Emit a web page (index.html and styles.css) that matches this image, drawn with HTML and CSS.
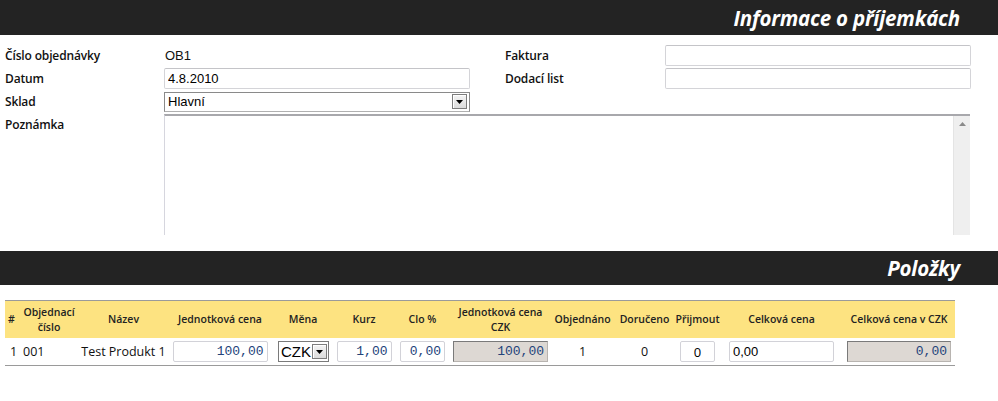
FILE: index.html
```html
<!DOCTYPE html>
<html lang="cs">
<head>
<meta charset="utf-8">
<title>Příjemka</title>
<link rel="stylesheet" href="styles.css">
</head>
<body>
<div class="bar"><h1>Informace o příjemkách</h1></div>

<div class="form">
  <div class="label r1 c1">Číslo objednávky</div>
  <div class="value r1 c2">OB1</div>
  <div class="label r1 c4">Faktura</div>
  <input class="field r1 c5" type="text" value="">

  <div class="label r2 c1">Datum</div>
  <input class="field r2 c2" type="text" value="4.8.2010">
  <div class="label r2 c4">Dodací list</div>
  <input class="field r2 c5" type="text" value="">

  <div class="label r3 c1">Sklad</div>
  <div class="select r3 c2"><span class="sel-text">Hlavní</span><span class="sel-btn"><svg width="7" height="4" viewBox="0 0 7 4"><path d="M0 0H7L3.5 4Z" fill="#000"/></svg></span></div>

  <div class="label note-label r4 c1">Poznámka</div>
  <div class="note r4">
    <textarea class="note-area"></textarea>
    <div class="scroll"><svg width="7" height="4" viewBox="0 0 7 4"><path d="M0 4H7L3.5 0Z" fill="#8a8a8a"/></svg></div>
  </div>
</div>

<div class="bar bar2"><h1>Položky</h1></div>

<table class="items">
  <colgroup>
    <col style="width:13px"><col style="width:62px"><col style="width:87px"><col style="width:106px">
    <col style="width:60px"><col style="width:62px"><col style="width:55px"><col style="width:101px">
    <col style="width:63px"><col style="width:61px"><col style="width:45px"><col style="width:123px">
    <col style="width:112px">
  </colgroup>
  <thead>
    <tr>
      <th>#</th>
      <th>Objednací<br>číslo</th>
      <th>Název</th>
      <th>Jednotková cena</th>
      <th>Měna</th>
      <th>Kurz</th>
      <th>Clo %</th>
      <th>Jednotková cena<br>CZK</th>
      <th>Objednáno</th>
      <th>Doručeno</th>
      <th>Přijmout</th>
      <th>Celková cena</th>
      <th>Celková cena v CZK</th>
    </tr>
  </thead>
  <tbody>
    <tr>
      <td class="left">1</td>
      <td class="left">001</td>
      <td>Test Produkt 1</td>
      <td><input class="cell num w95" type="text" value="100,00"></td>
      <td><div class="select small"><span class="sel-text">CZK</span><span class="sel-btn"><svg width="7" height="4" viewBox="0 0 7 4"><path d="M0 0H7L3.5 4Z" fill="#000"/></svg></span></div></td>
      <td><input class="cell num w55" type="text" value="1,00"></td>
      <td><input class="cell num w45" type="text" value="0,00"></td>
      <td><input class="cell num ro w95" type="text" value="100,00" readonly></td>
      <td>1</td>
      <td>0</td>
      <td><input class="cell ctr w35" type="text" value="0"></td>
      <td><input class="cell plain w105" type="text" value="0,00"></td>
      <td><input class="cell num ro w104" type="text" value="0,00" readonly></td>
    </tr>
  </tbody>
</table>
</body>
</html>
```

FILE: styles.css
```css
body {
  margin: 0;
  font-family: "Open Sans", "DejaVu Sans", sans-serif;
  font-size: 12px;
  color: #111;
  background: #fff;
}

.bar {
  background: #232323;
  height: 35px;
  display: flex;
  justify-content: flex-end;
  align-items: center;
  padding-right: 38px;
}
.bar h1 {
  margin: 0;
  color: #fff;
  font-family: "Open Sans", "DejaVu Sans", sans-serif;
  font-size: 20.5px;
  line-height: 24px;
  font-weight: 700;
  font-style: italic;
  letter-spacing: -0.2px;
}
.bar2 {
  margin-top: 16px;
  height: 34px;
}

.form {
  display: grid;
  grid-template-columns: 159px 306px 35px 160px 306px;
  grid-template-rows: 21px 21px 21px 121px;
  row-gap: 2px;
  padding: 10px 0 0 5px;
  align-items: center;
}
.r1 { grid-row: 1; }
.r2 { grid-row: 2; }
.r3 { grid-row: 3; }
.r4 { grid-row: 4; }
.c1 { grid-column: 1; }
.c2 { grid-column: 2; }
.c4 { grid-column: 4; }
.c5 { grid-column: 5; }

.label {
  font-weight: 600;
  color: #111;
  letter-spacing: -0.15px;
}
.value {
  font-family: "Liberation Sans", Arial, sans-serif;
  font-size: 13px;
  padding-left: 1px;
}
.field {
  box-sizing: border-box;
  height: 21px;
  width: 306px;
  margin: 0;
  border: 1px solid #d4d4d8;
  border-top-color: #c4c4c8;
  border-radius: 2px;
  padding: 0 3px;
  font-family: "Liberation Sans", Arial, sans-serif;
  font-size: 13px;
  color: #000;
  background: #fff;
}

.select {
  box-sizing: border-box;
  display: flex;
  align-items: center;
  height: 20px;
  width: 306px;
  border: 1px solid #8a8a8a;
  border-bottom-color: #b0b0b0;
  background: #fff;
  font-family: "Liberation Sans", Arial, sans-serif;
  font-size: 13px;
  color: #000;
}
.sel-text {
  flex: 1;
  padding-left: 3px;
}
.sel-btn {
  box-sizing: border-box;
  width: 15px;
  height: 15px;
  margin-right: 2px;
  border: 1px solid #7d7d7d;
  background: linear-gradient(#f4f4f4, #dcdcdc);
  box-shadow: inset 1px 1px 0 #fff;
  display: flex;
  align-items: center;
  justify-content: center;
}

.note-label {
  align-self: start;
  padding-top: 2px;
}
.note {
  grid-column: 2 / span 4;
  align-self: stretch;
  display: flex;
  height: 121px;
  overflow: hidden;
  border-top: 2px solid #a8a8ac;
  border-left: 1px solid #d6d6de;
  box-sizing: border-box;
  margin-right: 1px;
}
.note-area {
  flex: 1;
  border: 0;
  margin: 0;
  resize: none;
  outline: none;
  background: #fff;
}
.scroll {
  width: 17px;
  background: #efefef;
  border-left: 1px solid #e4e4e4;
  display: flex;
  justify-content: center;
  padding-top: 6px;
  box-sizing: border-box;
}

.items {
  margin: 15px 0 0 5px;
  width: 950px;
  table-layout: fixed;
  border-collapse: collapse;
  border-top: 1px solid #9a9a9a;
  border-bottom: 1px solid #9a9a9a;
}
.items th {
  background: #fde381;
  height: 37px;
  padding: 0;
  font-size: 10.5px;
  font-weight: 600;
  line-height: 15px;
  color: #222;
  text-align: center;
  white-space: nowrap;
}
.items td {
  height: 27px;
  padding: 0;
  text-align: center;
  font-size: 12.5px;
  color: #111;
  white-space: nowrap;
}
.items td.left {
  text-align: left;
  padding-left: 5px;
}
.cell {
  box-sizing: border-box;
  height: 21px;
  margin: 0;
  vertical-align: middle;
  border: 1px solid #d2d2d8;
  border-radius: 2px;
  padding: 0 3px;
  background: #fff;
}
.num {
  text-align: right;
  font-family: "Liberation Mono", "Courier New", monospace;
  font-size: 13px;
  color: #23437a;
}
.ro {
  background: #ddd8d3;
  border: 1px solid #b8b4b0;
  border-top-color: #7a7a7a;
  border-left-color: #7a7a7a;
  border-radius: 0;
}
.ctr {
  text-align: center;
  font-family: "Open Sans", "DejaVu Sans", sans-serif;
  font-size: 13px;
  color: #000;
}
.plain {
  text-align: left;
  font-family: "Liberation Sans", Arial, sans-serif;
  font-size: 13px;
  color: #000;
}
.w95 { width: 95px; }
.w55 { width: 55px; }
.w45 { width: 45px; }
.w35 { width: 35px; }
.w105 { width: 105px; }
.w104 { width: 104px; }
.select.small {
  width: 51px;
  height: 21px;
  margin: 0 auto;
  font-size: 15px;
  border-color: #7a7a7a;
}
.select.small .sel-text {
  padding-left: 2px;
}
.select.small .sel-btn {
  margin-right: 1px;
}
```
